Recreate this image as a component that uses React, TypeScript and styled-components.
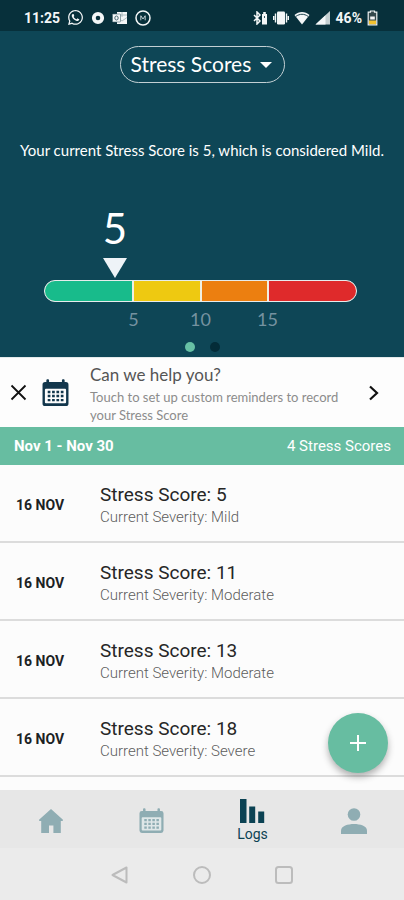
import React, { useState } from "react";
import styled, { createGlobalStyle } from "styled-components";
import { FaWhatsapp } from "react-icons/fa";

const GlobalStyle = createGlobalStyle`
  *, *::before, *::after { box-sizing: border-box; }
  body { margin: 0; background: #fcfcfc; font-family: Roboto, "Liberation Sans", sans-serif; }
  button, select { font: inherit; color: inherit; background: none; border: 0; padding: 0; cursor: pointer; }
  h1, h2, p, ul { margin: 0; padding: 0; font-weight: 400; }
  ul { list-style: none; }
  svg { display: block; flex: none; }
`;

const humanist = `Lato, "Open Sans", sans-serif`;

const Page = styled.div`
  min-height: 100vh;
  display: flex;
  flex-direction: column;
`;

const StatusBar = styled.header`
  height: 31px;
  padding: 4px 26px 0 24px;
  display: flex;
  align-items: center;
  justify-content: space-between;
  background: #07303b;
  color: #f4f7f8;
  font-size: 14px;
  font-weight: 700;
`;

const StatusGroup = styled.div<{ $gap: number }>`
  display: flex;
  align-items: center;
  gap: ${(p) => p.$gap}px;
`;

const Hero = styled.section`
  background: #0e4656;
  color: #fff;
  padding: 15px 0 5px;
  display: flex;
  flex-direction: column;
  font-family: ${humanist};
`;

const Picker = styled.label`
  align-self: center;
  display: grid;
  align-items: center;
  > * { grid-area: 1 / 1; }
  > svg { justify-self: end; margin-right: 13px; pointer-events: none; }
`;

const PickerSelect = styled.select`
  appearance: none;
  height: 37px;
  width: 165px;
  padding: 0 28px 2px 10px;
  border: 1px solid #c3d0d4;
  border-radius: 19px;
  font-size: 21px;
  color: #fff;
  option { color: #0e4656; }
`;

const Summary = styled.p`
  margin-top: 57px;
  padding: 0 16px;
  text-align: center;
  font-size: 15px;
  line-height: 20px;
`;

const Gauge = styled.div`
  margin: 42px 47px 0 44px;
`;

const MarkerTrack = styled.div`
  display: flex;
`;

const Marker = styled.div`
  width: 48px;
  margin-left: -24px;
  display: flex;
  flex-direction: column;
  align-items: center;
  font-size: 42px;
  line-height: 52px;
  svg { margin: 4px 0 2px; }
`;

const Scale = styled.div`
  height: 22px;
  display: grid;
  grid-template-columns: 89fr 67fr 67fr 89fr;
  gap: 2px;
  border: 1px solid #e6ecec;
  border-radius: 11px;
  overflow: hidden;
  background: #f0efe2;
`;

const Band = styled.div<{ $color: string }>`
  background: ${(p) => p.$color};
`;

const Ticks = styled.div`
  display: grid;
  grid-template-columns: 56fr 67fr 67fr 67fr 56fr;
  margin-top: 6px;
  text-align: center;
  font-size: 18px;
  line-height: 22px;
  color: #7592a0;
  span:first-child { grid-column-start: 2; }
`;

const Dots = styled.div`
  display: flex;
  justify-content: center;
  gap: 15px;
  margin-top: 12px;
`;

const Dot = styled.button<{ $active: boolean }>`
  width: 10px;
  height: 10px;
  border-radius: 50%;
  background: ${(p) => (p.$active ? "#67c1a5" : "#042c38")};
`;

const Help = styled.section`
  display: flex;
  align-items: center;
  min-height: 70px;
  padding: 0 24px 0 10px;
  border-top: 1px solid #e3eaeb;
  background: #fdfdfd;
  color: #111;
`;

const HelpAction = styled.button`
  flex: 1;
  display: flex;
  align-items: center;
  margin-left: 15px;
  text-align: left;
  font-family: ${humanist};
`;

const HelpIcon = styled.span`
  color: #12364c;
`;

const HelpText = styled.span`
  flex: 1;
  margin: 0 22px 0 21px;
`;

const HelpTitle = styled.span`
  display: block;
  font-size: 17px;
  line-height: 26px;
  color: #555;
`;

const HelpBody = styled.span`
  display: block;
  font-size: 13px;
  line-height: 18px;
  color: #8c8c8c;
`;

const Period = styled.div`
  min-height: 38px;
  padding: 0 13px 0 14px;
  display: flex;
  align-items: center;
  justify-content: space-between;
  background: #67bda1;
  color: #fff;
  font-size: 15px;
`;

const PeriodRange = styled.h2`
  font-size: 15px;
  font-weight: 700;
`;

const Logs = styled.main`
  flex: 1;
  position: relative;
  background: #fcfcfc;
  padding-bottom: 13px;
`;

const LogRow = styled.li`
  height: 78px;
  padding-top: 4px;
  display: flex;
  align-items: center;
  border-bottom: 2px solid #dcdcdc;
`;

const LogDate = styled.time`
  width: 84px;
  margin-left: 16px;
  font-size: 14px;
  font-weight: 700;
  color: #1c2224;
`;

const LogTitle = styled.p`
  font-size: 19px;
  line-height: 24px;
  color: #262626;
`;

const LogSeverity = styled.p`
  font-size: 15px;
  line-height: 20px;
  font-weight: 300;
  color: #5c5c5c;
`;

const AddButton = styled.button`
  position: absolute;
  right: 16px;
  bottom: 17px;
  width: 60px;
  height: 60px;
  border-radius: 50%;
  display: grid;
  place-items: center;
  background: #67bda1;
  box-shadow: 0 4px 7px rgba(0, 0, 0, 0.3);
`;

const TabBar = styled.nav`
  height: 58px;
  display: grid;
  grid-template-columns: repeat(4, 1fr);
  background: #e7e7e7;
`;

const Tab = styled.a<{ $active?: boolean }>`
  display: flex;
  flex-direction: column;
  align-items: center;
  justify-content: center;
  gap: 2px;
  padding-top: 3px;
  font-size: 14px;
  line-height: 18px;
  text-decoration: none;
  color: ${(p) => (p.$active ? "#0b4253" : "#8fadb3")};
`;

const SystemBar = styled.div`
  height: 52px;
  padding-top: 2px;
  display: flex;
  align-items: center;
  justify-content: center;
  gap: 62px;
  background: #ebebeb;
  color: #bcbcbc;
`;

const BadgeIcon = () => (
  <svg width="14" height="14" viewBox="0 0 14 14" fill="none" stroke="currentColor">
    <circle cx="7" cy="7" r="4.2" strokeWidth="3.8" />
  </svg>
);

const OutlookIcon = () => (
  <svg width="16" height="14" viewBox="0 0 16 14">
    <path d="M5 1h10v12H5z" fill="currentColor" />
    <path d="M6 7l4 3 5-3.5M10 1v5M6 4h9" stroke="#9fb0b4" strokeWidth="0.8" fill="none" />
    <rect x="0.5" y="3" width="8" height="8" rx="0.6" fill="currentColor" stroke="#4c6a72" strokeWidth="0.6" />
    <ellipse cx="4.5" cy="7" rx="1.7" ry="2" fill="none" stroke="#4c6a72" strokeWidth="1" />
  </svg>
);

const CircleMarkIcon = () => (
  <svg width="16" height="16" viewBox="0 0 16 16" fill="none" stroke="currentColor">
    <circle cx="8" cy="8" r="7" strokeWidth="1.5" />
    <path d="M5.8 5.5v4.8M10.2 5.5v4.8M6 6l2 3 2-3" strokeWidth="1" opacity="0.75" />
  </svg>
);

const BluetoothIcon = () => (
  <svg width="15" height="14" viewBox="0 0 15 14" fill="none" stroke="currentColor">
    <path d="M1 4l6 6-3 3V1l3 3-6 6" strokeWidth="1.5" />
    <path d="M9 3h1.2V1h2.6v2H14v10.5H9z" fill="currentColor" stroke="none" />
    <path d="M11.5 5v2" stroke="#07303b" strokeWidth="0.8" />
  </svg>
);

const VibrateIcon = () => (
  <svg width="16" height="14" viewBox="0 0 16 14">
    <rect x="4" y="0.5" width="8" height="13" rx="1.2" fill="currentColor" />
    <path d="M2.5 2.5v9M13.5 2.5v9M0.7 5v4M15.3 5v4" stroke="currentColor" strokeWidth="1.4" />
  </svg>
);

const WifiIcon = () => (
  <svg width="16" height="14" viewBox="0 0 16 14">
    <path d="M0.5 4C5 0 11 0 15.5 4L8 13.5z" fill="currentColor" />
    <path d="M2 5.3C6 2.6 10 2.6 14 5.3" stroke="#07303b" strokeWidth="0.9" fill="none" />
  </svg>
);

const SignalIcon = () => (
  <svg width="16" height="14" viewBox="0 0 16 14">
    <path d="M0.5 13.5L15 0v13.5z" fill="currentColor" opacity="0.8" />
    <path d="M0.5 13.5L10.5 4.2v9.3z" fill="currentColor" />
  </svg>
);

const BatteryIcon = () => (
  <svg width="11" height="16" viewBox="0 0 11 16">
    <path d="M3.5 2.2V1h4v1.2h2.3v12.6H1.2V2.2z" fill="#33484c" stroke="#eef2f2" strokeWidth="1.2" />
    <path d="M2 10.5h7v3.7H2z" fill="#f2c230" />
    <path d="M3.2 6.5h4.6v3H3.2z" fill="#f5f5f5" />
  </svg>
);

const CalendarIcon = ({ size, panel }: { size: number; panel: string }) => (
  <svg width={size} height={size} viewBox="0 0 26 26">
    <path
      d="M3 3h1.2V1.2c0-1.400 2.600-1.400 2.600 0V3h12.400V1.200c0-1.400 2.600-1.400 2.600 0V3H23a2.500 2.500 0 0 1 2.500 2.500v18A2.500 2.500 0 0 1 23 26H3a2.500 2.500 0 0 1-2.500-2.500v-18A2.500 2.500 0 0 1 3 3z"
      fill="currentColor"
    />
    <rect x="2.8" y="9.5" width="20.4" height="13.8" rx="1" fill={panel} />
    <path
      d="M5.5 12.5h15.2M5.5 16.4h15.2M5.5 20.3h15.2"
      stroke="currentColor"
      strokeWidth="2.3"
      strokeDasharray="2.6 1.6"
    />
  </svg>
);

const HomeIcon = () => (
  <svg width="26" height="24" viewBox="0 0 26 24" fill="currentColor">
    <path d="M13 0l11.700 10.600c.6.600.3 1.400-.5 1.400h-1.400v12H15.400v-7.500h-4.400V24H3.200V12H1.800c-.8 0-1.100-.8-.5-1.400z" />
  </svg>
);

const BarsIcon = () => (
  <svg width="25" height="24" viewBox="0 0 25 24" fill="currentColor">
    <path d="M0 0h6.500v24H0zM9.200 7.500h6v16.500h-6zM18.200 12.500h6V24h-6z" />
  </svg>
);

const PersonIcon = () => (
  <svg width="26" height="26" viewBox="0 0 26 26" fill="currentColor">
    <circle cx="13" cy="6.5" r="6.3" />
    <path d="M0 26v-3.500c0-4.500 7-6.500 13-6.500s13 2 13 6.500V26z" />
  </svg>
);

const bands = ["#18bb8b", "#eec911", "#ec7f10", "#df2a2b"];
const ticks = [5, 10, 15];
const current = { score: 5, position: 22.7 };
const entries = [
  { score: 5, severity: "Mild" },
  { score: 11, severity: "Moderate" },
  { score: 13, severity: "Moderate" },
  { score: 18, severity: "Severe" },
];

export default function App() {
  const [slide, setSlide] = useState(0);
  const [helpOpen, setHelpOpen] = useState(true);

  return (
    <Page>
      <GlobalStyle />
      <StatusBar>
        <StatusGroup $gap={7}>
          <span>11:25</span>
          <FaWhatsapp size={17} />
          <BadgeIcon />
          <OutlookIcon />
          <CircleMarkIcon />
        </StatusGroup>
        <StatusGroup $gap={5}>
          <BluetoothIcon />
          <VibrateIcon />
          <WifiIcon />
          <SignalIcon />
          <span>46%</span>
          <BatteryIcon />
        </StatusGroup>
      </StatusBar>

      <Hero>
        <Picker>
          <PickerSelect aria-label="Log type">
            <option>Stress Scores</option>
          </PickerSelect>
          <svg width="12" height="6" viewBox="0 0 12 6">
            <path d="M0 0h12L6 6z" fill="#fff" />
          </svg>
        </Picker>
        <Summary>Your current Stress Score is 5, which is considered Mild.</Summary>
        <Gauge>
          <MarkerTrack style={{ paddingLeft: `${current.position}%` }}>
            <Marker>
              {current.score}
              <svg width="24" height="20" viewBox="0 0 24 20">
                <path d="M0 0h24L12 20z" fill="#eef3f7" />
              </svg>
            </Marker>
          </MarkerTrack>
          <Scale>
            {bands.map((color) => (
              <Band key={color} $color={color} />
            ))}
          </Scale>
          <Ticks>
            {ticks.map((tick) => (
              <span key={tick}>{tick}</span>
            ))}
          </Ticks>
        </Gauge>
        <Dots>
          {[0, 1].map((i) => (
            <Dot key={i} $active={slide === i} aria-label={`Slide ${i + 1}`} onClick={() => setSlide(i)} />
          ))}
        </Dots>
      </Hero>

      {helpOpen && (
        <Help>
          <button aria-label="Dismiss" onClick={() => setHelpOpen(false)}>
            <svg width="17" height="17" viewBox="0 0 17 17" stroke="currentColor" strokeWidth="1.8">
              <path d="M1.5 1.5l14 14M15.5 1.5l-14 14" />
            </svg>
          </button>
          <HelpAction>
            <HelpIcon>
              <CalendarIcon size={27} panel="#fdfdfd" />
            </HelpIcon>
            <HelpText>
              <HelpTitle>Can we help you?</HelpTitle>
              <HelpBody>Touch to set up custom reminders to record your Stress Score</HelpBody>
            </HelpText>
            <svg width="12" height="16" viewBox="0 0 12 16" fill="none" stroke="#111" strokeWidth="2.2">
              <path d="M2 1.5L9 8l-7 6.5" />
            </svg>
          </HelpAction>
        </Help>
      )}

      <Period>
        <PeriodRange>Nov 1 - Nov 30</PeriodRange>
        <span>4 Stress Scores</span>
      </Period>

      <Logs>
        <ul>
          {entries.map((entry) => (
            <LogRow key={entry.score}>
              <LogDate dateTime="11-16">16 NOV</LogDate>
              <div>
                <LogTitle>Stress Score: {entry.score}</LogTitle>
                <LogSeverity>Current Severity: {entry.severity}</LogSeverity>
              </div>
            </LogRow>
          ))}
        </ul>
        <AddButton aria-label="Add score">
          <svg width="16" height="16" viewBox="0 0 16 16" stroke="#fff" strokeWidth="2">
            <path d="M8 0v16M0 8h16" />
          </svg>
        </AddButton>
      </Logs>

      <TabBar>
        <Tab href="#home" aria-label="Home">
          <HomeIcon />
        </Tab>
        <Tab href="#calendar" aria-label="Calendar">
          <CalendarIcon size={25} panel="#dfe7e8" />
        </Tab>
        <Tab href="#logs" $active>
          <BarsIcon />
          Logs
        </Tab>
        <Tab href="#profile" aria-label="Profile">
          <PersonIcon />
        </Tab>
      </TabBar>

      <SystemBar>
        <button aria-label="Back">
          <svg width="20" height="18" viewBox="0 0 20 18" fill="none" stroke="currentColor" strokeWidth="2" strokeLinejoin="round">
            <path d="M16.5 1.5v15L2.5 9z" />
          </svg>
        </button>
        <button aria-label="Overview">
          <svg width="20" height="20" viewBox="0 0 20 20" fill="none" stroke="currentColor" strokeWidth="2">
            <circle cx="10" cy="10" r="8" />
          </svg>
        </button>
        <button aria-label="Recent apps">
          <svg width="20" height="20" viewBox="0 0 20 20" fill="none" stroke="currentColor" strokeWidth="2">
            <rect x="2" y="2" width="16" height="16" rx="2.5" />
          </svg>
        </button>
      </SystemBar>
    </Page>
  );
}
